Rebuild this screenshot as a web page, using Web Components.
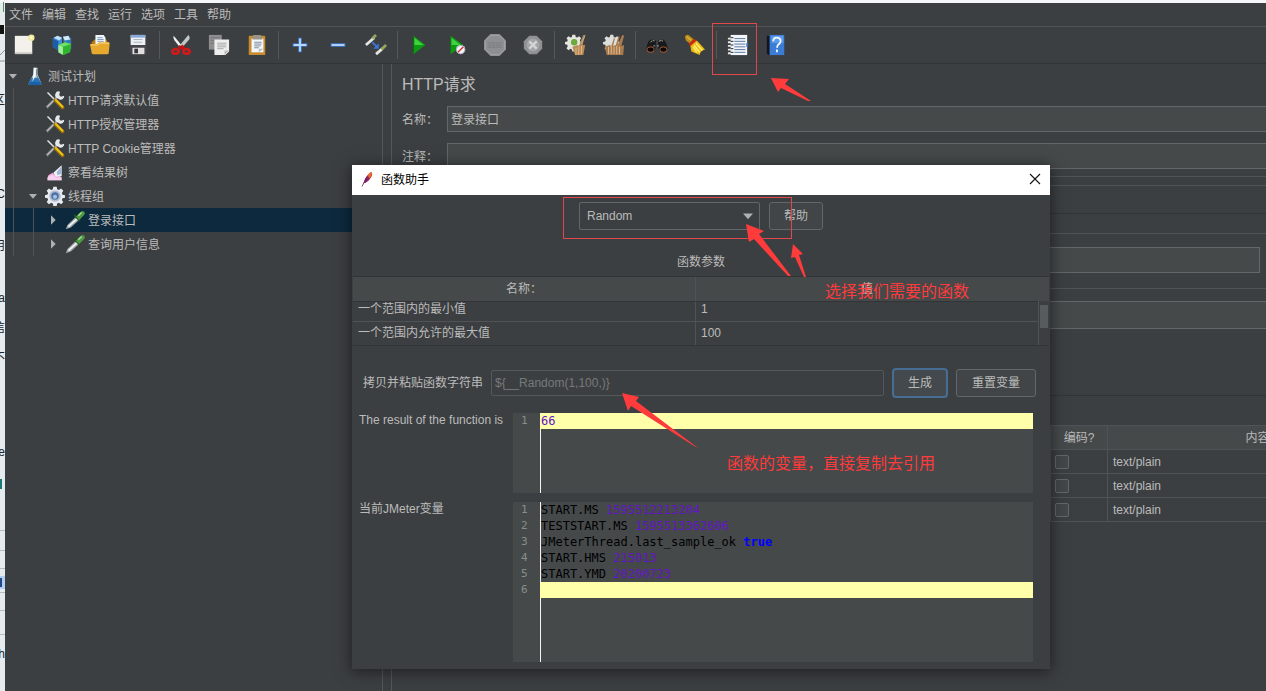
<!DOCTYPE html>
<html lang="zh-CN">
<head>
<meta charset="utf-8">
<title>Apache JMeter</title>
<style>
  :root {
    --bg: #3c3f41; --field: #45494a; --line: #646769; --soft: #515456; --dark: #323537;
    --text: #bbbbbb; --select: #0d293e; --red: #ff3b3b;
  }
  body {
    margin: 0; height: 100vh; overflow: hidden; background: #f4f6fa; color: var(--text);
    font: 12px/16px "Liberation Sans", "Noto Sans CJK SC", sans-serif;
  }
</style>
</head>
<body>
<app-window></app-window>
<script>
const define = (name, html, setup) => {
  const template = document.createElement('template');
  template.innerHTML = '<style>*{box-sizing:border-box}button,input,select{font:inherit;color:inherit}</style>' + html;
  customElements.define(name, class extends HTMLElement {
    constructor() {
      super();
      this.attachShadow({ mode: 'open' }).append(template.content.cloneNode(true));
    }
    connectedCallback() { if (setup) setup(this, this.shadowRoot); }
  });
};

/* Icon drawings, all on a 24 x 24 grid */
const tools = '<path d="M3 3l10 10" stroke="#e4e4e4" stroke-width="1.800"/><path d="M2 21L15 8" stroke="#8c9093" stroke-width="3"/><path d="M3 20L16 7" stroke="#d5d8da" stroke-width="1"/><path d="M15 10a4 4 0 0 1 3-8l-1 4 2 2 4-1a4 4 0 0 1-6 4z" fill="#e6e9eb"/><path d="M12.500 12.500L21 21" stroke="#8f6c08" stroke-width="4.500" stroke-linecap="round"/><path d="M13 12l8 8" stroke="#f0c020" stroke-width="2.500" stroke-linecap="round"/>';
const pipette = '<path d="M1 23l2-5 10-10 4 4-10 9z" fill="#a3a9a9"/><path d="M4 20l11-10" stroke="#f2f5f5" stroke-width="2"/><path d="M11 6l7 7" stroke="#244f24" stroke-width="2.500"/><path d="M13 8l5-5q3-3 5-1t-1 5l-5 5z" fill="#4f9a45"/><path d="M16 7l4-4" stroke="#a4dc98" stroke-width="1.800"/>';
const gearPath = 'M10 1h4l.6 3 2 .9L19.300 3 22 5.700 20.200 8.400l.8 2 3 .6v3l-3 .7-.9 2L22 19.300 19.300 22l-2.700-1.800-2 .8-.6 3h-4l-.6-3-2-.8L4.700 22 2 19.300l1.800-2.700-.8-2L0 14v-3l3-.7.8-2L2 5.700 4.700 3l2.700 1.900 2-.9z';
const ICONS = {
  none: '',
  file: '<path d="M2 2h19v19H2z" fill="#f2f1ec"/><path d="M2 20h19v2H2z" fill="#c9c8c2"/><circle cx="20" cy="4" r="3.500" fill="#f0ea9a"/><circle cx="20" cy="4" r="1.500" fill="#fffbd0"/>',
  boxes: '<path d="M2 5l5-3 5 2v10l-4 4-6-4z" fill="#3f8fd8"/><path d="M2 5l6 3v10l-6-4z" fill="#1f5ca8"/><path d="M3 4l4-2 5 2-3 3z" fill="#c5e0f5"/><path d="M13 3l6-1 3 3v11l-7 3z" fill="#3478b8"/><path d="M13 3l6-1 2 4-6 1z" fill="#d6ebf8"/><path d="M8 12l7-3 7 2-1 9-7 3-6-3z" fill="#2fb52f"/><path d="M8 12l5 2v9l-5-3z" fill="#a2eea0"/><path d="M8 12l7-3 7 2-9 3z" fill="#6ee06a"/>',
  open: '<path d="M3 9l3-3h13l2 4v8H3z" fill="#b97a12"/><path d="M7 1h9l2 3v9H7z" fill="#f2f5fa"/><path d="M9 4h6M9 6h7M9 8h7" stroke="#7897bd"/><path d="M1 11h8l2-2h10q2 0 1.500 2l-1 10q0 1-2 1H5q-2 0-2-1z" fill="#e6a92d"/><path d="M2 12h8l2-2h10" stroke="#f9d779" fill="none"/>',
  save: '<path d="M3 2h18v20H5l-2-2z" fill="#46464c"/><path d="M4 1h16v11H4z" fill="#eef2f7"/><path d="M4 1h16v3H4z" fill="#88a9d8"/><path d="M7 6h10M7 9h10" stroke="#a9b2bd"/><path d="M6 15h13v7H6z" fill="#e1dfe0"/><path d="M8 16h4v5H8z" fill="#37373b"/>',
  cut: '<path d="M4 2q-1 2 1 5l7 9 2-2z" fill="#edf2f2"/><path d="M20 1q3 3 0 6l-8 9-2-3z" fill="#bfcaca"/><path d="M12 13l-2 3m2-3l3 3" stroke="#c01414" stroke-width="4"/><ellipse cx="6" cy="19" rx="3.500" ry="2.500" fill="none" stroke="#d01919" stroke-width="3"/><ellipse cx="18" cy="19" rx="3.500" ry="2.500" fill="none" stroke="#d01919" stroke-width="3"/>',
  copy: '<path d="M1 1h14v16H1z" fill="#8e8e90"/><path d="M3 4h10M3 7h10M3 10h10" stroke="#777"/><path d="M7 6h16v13l-4 4H7z" fill="#eeeeee"/><path d="M10 10h10M10 12h10M10 14h10M10 16h7" stroke="#a3a3a3"/><path d="M18 23v-5h5z" fill="#bbb"/>',
  paste: '<rect x="3" y="2" width="18" height="21" rx="1" fill="#c88c2f"/><path d="M6 5h13v15H6z" fill="#f5f6f8"/><path d="M8 1h8l2 5H7z" fill="#97948b"/><path d="M9 9h8M9 11h8M9 13h7M9 15h5" stroke="#74849d"/><path d="M14 20v-4h5z" fill="#b5bccb"/>',
  plus: '<path d="M10 4h4v6h6v4h-6v6h-4v-6H4v-4h6z" fill="#3f76c0"/><path d="M12 5v14M5 12h14" stroke="#b7d8fa" stroke-width="2"/>',
  minus: '<path d="M4 10h16v4H4z" fill="#3f76c0"/><path d="M5 12h14" stroke="#b7d8fa" stroke-width="2"/>',
  toggle: '<path d="M1 12l9-8" stroke="#e4e6df" stroke-width="3"/><path d="M8 5l4-4" stroke="#91a75d" stroke-width="3"/><path d="M12 22l7-6" stroke="#e4e6df" stroke-width="3"/><path d="M18 17l5-5" stroke="#91a75d" stroke-width="3"/><path d="M8 9l5 5" stroke="#3b76d8" stroke-width="2"/><path d="M15 10v6H9z" fill="#3b76d8"/>',
  run: '<path d="M6 2l13 10L6 22z" fill="#0d9a12"/><path d="M7 4l10 8H7z" fill="#3fd23f"/><path d="M6 3v18" stroke="#0a6d0e" stroke-width="1"/>',
  runSkip: '<path d="M5 2l14 10L5 22z" fill="#0d9a12"/><path d="M6 4l10 8H6z" fill="#3fd23f"/><circle cx="16" cy="17" r="5" fill="#f3f3fa"/><path d="M13 20l6-6" stroke="#d12d2d" stroke-width="1.500"/><circle cx="16" cy="17" r="4.500" fill="none" stroke="#a3a5b5"/>',
  stop: '<path d="M7 0h10l7 7v10l-7 7H7l-7-7V7z" fill="#8d8f90"/><path d="M7.500 1.500h9l6 6v9l-6 6h-9l-6-6v-9z" fill="none" stroke="#a3a5a6"/><path d="M4 9.500h16M4 14.500h16" stroke="#7d8081"/><path d="M5 12h14" stroke="#808384" stroke-width="3" stroke-dasharray="3 1"/>',
  shutdown: '<path d="M8 2h8l6 6v8l-6 6H8l-6-6V8z" fill="#8f9192"/><circle cx="12" cy="12" r="7" fill="#a3a5a6"/><path d="M8 8l8 8M16 8l-8 8" stroke="#d3d5d5" stroke-width="2.500"/>',
  clear: '<g transform="translate(0 0) scale(.8)"><path d="' + gearPath + '" fill="#e5e5e0"/></g><circle cx="10" cy="9" r="3.500" fill="#6da83a"/><path d="M8 14l6-2 1 1 5-12 2 1-3 10h3l-2 11h-9z" fill="#b98b59"/><path d="M12 15v8M15 14v9M18 13v9" stroke="#e2bd8b"/><path d="M18 11l4-10" stroke="#b9ab95"/>',
  clearAll: '<g transform="translate(0 0) scale(.8)"><path d="' + gearPath + '" fill="#dddedb"/></g><path d="M2 14l5-2 2 1 3-9 1 1-2 8 3-1 3-10 1 1-2 9 5-11 2 1-3 11 3-1-1 11H4z" fill="#a97c50"/><path d="M6 14v8M9 13v9M12 14v8M15 13v9M18 14v8" stroke="#dfbb8d"/>',
  search: '<path d="M0 17Q2 6 6 6l5 1-1 11zM24 17Q22 6 18 6l-5 1 1 11z" fill="#17191a"/><path d="M5 9q2-3 5-1M14 8q4-2 5 1" stroke="#d2d2c8" fill="none" stroke-dasharray="2 1"/><ellipse cx="5" cy="17" rx="4" ry="3" fill="#090909" stroke="#b2653b"/><ellipse cx="19" cy="17" rx="4" ry="3" fill="#090909" stroke="#b2653b"/><path d="M8 13h7" stroke="#aaa" stroke-dasharray="2 2"/>',
  broom: '<path d="M1 3q1-3 4-2l6 5-5 4-4-3z" fill="#b98b16"/><path d="M3 3l5 4" stroke="#dfb93e" stroke-width="1.500"/><path d="M5 11l6-6 3 3-7 6z" fill="#c92b17"/><path d="M7 13l7-6 9 10q-5 1-6 6l-9-4z" fill="#e8b817"/><path d="M11 12l6 8M13 10l7 8M10 14l4 6" stroke="#ffed64" stroke-width="1.800"/>',
  notebook: '<path d="M4 1h18v22H4z" fill="#f2f5f9"/><path d="M8 5h12M8 8h12M8 11h12M8 14h12M8 17h12M8 20h12" stroke="#50719d"/><path d="M1 5h5M1 9h5M1 13h5M1 17h5M1 21h5" stroke="#e9e9e9" stroke-width="2"/><path d="M4 4h3M4 8h3M4 12h3M4 16h3M4 20h3" stroke="#15191e"/><path d="M21 10h2v4h-2z" fill="#3d79c8"/>',
  help: '<path d="M2 2h5v21H4l-2-2z" fill="#11151c"/><path d="M5 1h16v22H5z" fill="#3b7cd4"/><path d="M7 2h13v8H7z" fill="#5a9cea"/><path d="M9 8q0-4 4-4t4 4q0 2-3 4l-1 3M13 17v3" fill="none" stroke="#f1f6ff" stroke-width="2"/>',
  flask: '<path d="M10 2h5v8l5 12H4l6-12z" fill="#c3d3dc"/><path d="M8 14h8l4 8H4z" fill="#2675bd"/><path d="M11 2h2v9l-4 8z" fill="#f7fbfd"/><path d="M14 4v7l3 7" stroke="#587687" fill="none"/><ellipse cx="12" cy="21" rx="8" ry="2" fill="#1861a7"/>',
  tools, pipette,
  chart: '<path d="M3 22l1-6 5-3 5 4 4-1 2 6z" fill="#f6a9de"/><path d="M3 22v-4l6-3 4 4 7-1v4z" fill="#f5d2ee"/><path d="M10 13l10-9v13h-4l-3 1z" fill="#eef3fa"/><path d="M14 12l6-7v9l-5 2z" fill="#a4b5d3"/>',
  gear: '<path d="' + gearPath + '" fill="#e7ebf1"/><circle cx="12" cy="12" r="7" fill="#b1bdcd"/><circle cx="12" cy="12" r="4.500" fill="#4a70a8"/><circle cx="12" cy="13" r="2.500" fill="#a7c1e2"/>',
  feather: '<path d="M6 21l3-6" stroke="#6b2450" stroke-width="1"/><path d="M8 17q1-7 7-12 2-2 3 0t-2 6q-3 5-8 6z" fill="#a5204c"/><path d="M13 8q2-4 5-4 1 1-1 4l-2 3z" fill="#e5702b"/><path d="M8 17q1-5 4-8l1 4q-2 4-5 4z" fill="#6b2470"/>',
  close: '<path d="M6 6l12 12M18 6L6 18" stroke="#111" stroke-width="1.300"/>',
  down: '<path d="M6 9h12l-6 7z" fill="#aeb1b3"/>',
  right: '<path d="M9 5l7 7-7 7z" fill="#aeb1b3"/>'
};
customElements.define('ui-icon', class extends HTMLElement {
  static observedAttributes = ['name'];
  constructor() { super(); this.attachShadow({ mode: 'open' }); }
  attributeChangedCallback() {
    this.shadowRoot.innerHTML = `<style>:host{display:block;flex:none;width:24px;height:24px}svg{display:block;width:100%;height:100%}</style>
      <svg viewBox="0 0 24 24" fill="none" aria-hidden="true">${ICONS[this.getAttribute('name')]}</svg>`;
  }
});

define('menu-bar', `
<style>
  :host { display: block; border-bottom: 1px solid var(--soft); }
  nav { display: flex; height: 23px; padding-left: 4px; gap: 9px; }
  button { border: 0; padding: 0; background: none; }
</style>
<nav><button>文件</button><button>编辑</button><button>查找</button><button>运行</button><button>选项</button><button>工具</button><button>帮助</button></nav>`);

define('tool-button', `
<style>
  :host { display: block; }
  button { display: grid; place-items: center; width: 38px; height: 36px; border: 0; padding: 0; background: none; }
  ui-icon { width: 22px; height: 22px; }
</style>
<button><ui-icon name="none"></ui-icon></button>`, (el, root) => {
  root.querySelector('ui-icon').setAttribute('name', el.getAttribute('icon'));
  root.querySelector('button').setAttribute('aria-label', el.getAttribute('label'));
});

define('tool-bar', `
<style>
  :host { display: flex; height: 37px; border-bottom: 1px solid var(--dark); }
  i { width: 1px; margin: 4px 2px; background: #555859; }
</style>
<tool-button icon="file" label="新建"></tool-button><tool-button icon="boxes" label="模板"></tool-button><tool-button icon="open" label="打开"></tool-button><tool-button icon="save" label="保存"></tool-button><i></i>
<tool-button icon="cut" label="剪切"></tool-button><tool-button icon="copy" label="复制"></tool-button><tool-button icon="paste" label="粘贴"></tool-button><i></i>
<tool-button icon="plus" label="展开"></tool-button><tool-button icon="minus" label="折叠"></tool-button><tool-button icon="toggle" label="切换"></tool-button><i></i>
<tool-button icon="run" label="启动"></tool-button><tool-button icon="runSkip" label="不停顿开始"></tool-button><tool-button icon="stop" label="停止"></tool-button><tool-button icon="shutdown" label="关闭"></tool-button><i></i>
<tool-button icon="clear" label="清除"></tool-button><tool-button icon="clearAll" label="清除全部"></tool-button><i></i>
<tool-button icon="search" label="搜索"></tool-button><tool-button icon="broom" label="重置搜索"></tool-button><i></i>
<tool-button icon="notebook" label="函数助手"></tool-button><tool-button icon="help" label="帮助"></tool-button>`);

define('tree-node', `
<style>
  :host { display: block; }
  .row { display: flex; align-items: center; height: 24px; }
  :host([selected]) .row { background: var(--select); }
  .indent { display: flex; align-self: stretch; }
  .indent i { width: 20px; padding-left: 8px; }
  .indent i::before { content: ""; display: block; width: 1px; height: 100%; background: #505355; }
  .arrow { width: 16px; height: 16px; }
  .pic { width: 20px; height: 20px; margin: 0 3px 0 4px; }
  .text { padding-top: 2px; }
</style>
<div class="row"><span class="indent"></span><ui-icon class="arrow"></ui-icon><ui-icon class="pic"></ui-icon><span class="text"><slot></slot></span></div>`, (el, root) => {
  root.querySelector('.indent').innerHTML = '<i></i>'.repeat(+el.getAttribute('level'));
  root.querySelector('.arrow').setAttribute('name', el.getAttribute('arrow') || 'none');
  root.querySelector('.pic').setAttribute('name', el.getAttribute('icon'));
});

define('test-tree', `
<style>:host { display: block; }</style>
<tree-node level="0" arrow="down" icon="flask">测试计划</tree-node>
<tree-node level="1" icon="tools">HTTP请求默认值</tree-node>
<tree-node level="1" icon="tools">HTTP授权管理器</tree-node>
<tree-node level="1" icon="tools">HTTP Cookie管理器</tree-node>
<tree-node level="1" icon="chart">察看结果树</tree-node>
<tree-node level="1" arrow="down" icon="gear">线程组</tree-node>
<tree-node level="2" arrow="right" icon="pipette" selected>登录接口</tree-node>
<tree-node level="2" arrow="right" icon="pipette">查询用户信息</tree-node>`);

define('request-panel', `
<style>
  :host { display: block; overflow: hidden; padding-left: 10px; }
  h1 { margin: 0; height: 42px; font: 16px/42px "Liberation Sans", "Noto Sans CJK SC", sans-serif; }
  .field { display: grid; grid-template-columns: 45px 1fr; align-items: center; height: 26px; margin-bottom: 11px; }
  .field label { padding-top: 2px; }
  input[type=text] { display: block; width: 100%; height: 26px; padding: 0 3px; border: 1px solid var(--line); border-right: 0; background: var(--field); }
  .field input { padding-bottom: 2px; }
  .tabs { height: 9px; margin-top: -4px; border-top: 1px solid var(--soft); }
  .proto { height: 49px; border: solid var(--soft); border-width: 1px 0; padding-top: 27px; }
  .proto::before { content: ""; display: block; height: 1px; background: var(--dark); }
  .path { padding: 13px 6px 15px 0; border-bottom: 1px solid var(--soft); }
  .path input { border-right: 1px solid var(--line); }
  .args { padding: 12px 0 66px; border-bottom: 1px solid var(--dark); }
  .args input { height: 28px; }
  table { width: 1006px; margin-top: 29px; border-collapse: collapse; table-layout: fixed; }
  th { height: 24px; padding: 0; background: var(--field); font-weight: normal; border: 1px solid #505355; }
  td { height: 24px; padding: 0 5px; border: 1px solid #505355; }
  td.check { padding: 0 4px; }
  input[type=checkbox] { appearance: none; display: block; width: 14px; height: 14px; margin: 0; border: 1px solid var(--line); border-radius: 2px; background: #43474a; }
</style>
<h1>HTTP请求</h1>
<div class="field"><label for="name">名称：</label><input id="name" type="text" value="登录接口"></div>
<div class="field"><label for="note">注释：</label><input id="note" type="text"></div>
<div class="tabs"></div>
<div class="proto"></div>
<div class="path"><input type="text" aria-label="路径"></div>
<div class="args"><input type="text" aria-label="参数"></div>
<table>
  <colgroup><col><col style="width:57px"><col style="width:300px"></colgroup>
  <thead><tr><th></th><th>编码?</th><th>内容</th></tr></thead>
  <tbody>
    <tr><td></td><td class="check"><input type="checkbox" aria-label="编码"></td><td>text/plain</td></tr>
    <tr><td></td><td class="check"><input type="checkbox" aria-label="编码"></td><td>text/plain</td></tr>
    <tr><td></td><td class="check"><input type="checkbox" aria-label="编码"></td><td>text/plain</td></tr>
  </tbody>
</table>`);

define('code-line', `
<style>
  :host { display: grid; grid-template-columns: 27px 1fr; height: 16px; font: 12px/16px "DejaVu Sans Mono", monospace; color: #000; }
  span { color: #8a8d8e; font-size: 11px; padding-left: 8px; }
  div { padding-left: 1px; white-space: pre; }
  :host([active]) div { background: #ffffaa; }
  ::slotted(b) { font-weight: normal; color: #6414c8; }
  ::slotted(strong) { color: #0000ff; }
</style>
<span></span><div><slot></slot></div>`, (el, root) => { root.querySelector('span').textContent = el.getAttribute('n'); });

define('code-view', `
<style>
  :host { display: block; background: linear-gradient(#f4f4f4, #f4f4f4) 27px 0 / 1px 100% no-repeat var(--field); }
</style><slot></slot>`);

define('function-dialog', `
<style>
  :host { display: flex; flex-direction: column; background: var(--bg); box-shadow: 0 2px 14px 1px rgba(0,0,0,.5); }
  header { display: flex; align-items: center; height: 30px; padding: 0 5px 2px 5px; background: #fff; color: #000; }
  header ui-icon { width: 20px; height: 20px; }
  header span { flex: 1; padding: 2px 0 0 4px; }
  header button { border: 0; padding: 0; background: none; }
  .pick { display: flex; justify-content: center; gap: 9px; padding-top: 7px; }
  .select { display: grid; width: 181px; }
  .select > * { grid-area: 1 / 1; }
  .select ui-icon { width: 20px; height: 20px; place-self: center end; margin-right: 2px; pointer-events: none; }
  select { appearance: none; width: 100%; height: 28px; padding: 0 7px; border: 1px solid var(--line); border-radius: 2px; background: var(--bg); }
  .btn { height: 28px; padding: 0 14px; border: 1px solid var(--line); border-radius: 3px; background: #414547; }
  h2 { margin: 0; padding: 24px 0 6px; font: inherit; text-align: center; }
  .grid { display: grid; grid-template-columns: 1fr 11px; margin: 0 1px; border: solid var(--dark); border-width: 1px 0; background: linear-gradient(var(--field) 24px, transparent 24px); }
  table { width: 100%; border-collapse: collapse; table-layout: fixed; }
  th { height: 24px; padding: 0; font-weight: normal; border-bottom: 1px solid var(--dark); }
  td { height: 24px; padding: 0 5px; border-bottom: 1px solid #505355; }
  tr > :first-child { border-right: 1px solid #505355; }
  tr.cut td { height: 19px; padding-bottom: 5px; line-height: 14px; }
  tr:last-child td { border-bottom: 0; }
  .bar { margin-top: 24px; padding: 4px 1px; border-left: 1px solid #505355; }
  .bar::before { content: ""; display: block; height: 23px; background: #585b5c; }
  .copy { display: flex; align-items: center; height: 30px; margin: 22px 14px 0 11px; }
  .copy input { flex: 1; min-width: 0; height: 26px; margin: 0 8px 0 8px; padding: 0 3px; border: 1px solid #555859; border-radius: 2px; background: var(--bg); color: #777a7b; }
  .copy .btn { padding: 0 15px; }
  .copy .go { height: 30px; padding: 0 14px; margin-right: 8px; border: 2px solid #466d94; border-radius: 4px; background: #43494c; }
  .out { display: grid; grid-template-columns: 154px 1fr; margin: 15px 17px 0 7px; row-gap: 9px; }
  .out span { line-height: 14px; }
  .big { min-height: 160px; } .small { min-height: 80px; }
</style>
<header><ui-icon name="feather"></ui-icon><span>函数助手</span><button aria-label="关闭"><ui-icon name="close"></ui-icon></button></header>
<div class="pick">
  <div class="select"><select aria-label="函数"><option>Random</option></select><ui-icon name="down"></ui-icon></div>
  <button class="btn">帮助</button>
</div>
<h2>函数参数</h2>
<div class="grid">
  <table>
    <thead><tr><th>名称：</th><th>值</th></tr></thead>
    <tbody><tr class="cut"><td>一个范围内的最小值</td><td>1</td></tr><tr><td>一个范围内允许的最大值</td><td>100</td></tr></tbody>
  </table>
  <div class="bar"></div>
</div>
<div class="copy"><label for="fn">拷贝并粘贴函数字符串</label><input id="fn" type="text" readonly value="\${__Random(1,100,)}"><button class="btn go">生成</button><button class="btn">重置变量</button></div>
<div class="out">
  <span>The result of the function is</span>
  <code-view class="small"><code-line n="1" active><b>66</b></code-line></code-view>
  <span>当前JMeter变量</span>
  <code-view class="big"><code-line n="1">START.MS <b>1595512213204</b></code-line><code-line n="2">TESTSTART.MS <b>1595513362606</b></code-line><code-line n="3">JMeterThread.last_sample_ok <strong>true</strong></code-line><code-line n="4">START.HMS <b>215013</b></code-line><code-line n="5">START.YMD <b>20200723</b></code-line><code-line n="6" active></code-line></code-view>
</div>`);

/* Red hand-made marks that lie over the window */
define('note-layer', `
<style>
  :host { position: absolute; inset: 0; overflow: hidden; pointer-events: none; color: var(--red); }
  svg { display: block; width: 100%; height: 100%; }
  p { position: absolute; margin: 0; font-size: 16px; line-height: 20px; white-space: nowrap; }
  .pick { left: 825px; top: 282px; }
  .use { left: 727px; top: 454px; }
</style>
<svg aria-hidden="true">
  <g fill="none" stroke="#e0484c" shape-rendering="crispEdges"><rect x="712.500" y="23.500" width="44" height="51"/><rect x="563.500" y="197.500" width="228" height="41"/></g>
  <g fill="#ff3b3b">
    <path d="M771 78l18 1-4 5 26 17h-3l-27-13-3 4z"/>
    <path d="M746 224l18 7-5 3 32 42h-3l-34-37-5 3z"/>
    <path d="M793 244l10 10-4 1 7 22h-2l-9-20-4 1z"/>
    <path d="M622 393l17 4-3 4 62 47-4-2-63-40-3 5z"/>
  </g>
</svg>
<p class="pick">选择我们需要的函数</p>
<p class="use">函数的变量，直接复制去引用</p>`);

/* Sliver of the page behind the application window: line ends and rules */
define('back-page', `
<style>
  :host { display: grid; grid-template: 100% / 5px; overflow: hidden; background: #e6ebef; color: #222; }
  svg, .ends { grid-area: 1 / 1; }
  svg { display: block; width: 5px; height: 691px; }
  .ends { display: flex; flex-direction: column; align-items: flex-end; min-width: 0; }
  span { flex: none; height: 16px; }
  .s1 { margin-top: 92px; } .s2 { margin-top: 78px; } .s3 { margin-top: 36px; } .s4 { margin-top: 14px; } .s5 { margin-top: 186px; }
</style>
<svg fill="none" aria-hidden="true">
  <path d="M0 0h5v3H0z" fill="#f4f6fa"/><path d="M3 2h1v10H3z" fill="#4c9a50"/>
  <path d="M0 25h4v9H0z" fill="#111"/><path d="M0 55l5-5M0 61h5" stroke="#8c969c"/>
  <path d="M0 479h2v10H0z" fill="#1b7a72"/>
  <path d="M0 530.500h5M0 550.500h5M0 568.500h5M0 592.500h5M0 610.500h5M0 634.500h5" stroke="#b5bcc2"/>
  <path d="M0 576h5v13H0z" fill="#b4cdf2"/><path d="M0 578h2v9H0z" fill="#234a88"/>
</svg>
<div class="ends" aria-hidden="true"><span class="s1">区</span><span class="s2">C</span><span class="s3">用</span><span class="s3">a</span><span class="s4">信</span><span class="s4">不</span><span class="s2">e</span><span class="s5">h</span></div>`);

define('app-window', `
<style>
  :host { display: grid; grid-template-columns: 5px 1fr; height: 100%; position: relative; }
  .app { display: flex; flex-direction: column; min-width: 0; margin-top: 3px; background: var(--bg); }
  main { flex: 1; min-height: 0; display: grid; grid-template-columns: 377px 10px 1fr; }
  .split { border: solid #55585a; border-width: 0 1px; }
  function-dialog { position: absolute; left: 352px; top: 165px; width: 698px; height: 504px; }
</style>
<back-page></back-page>
<div class="app">
  <menu-bar></menu-bar>
  <tool-bar></tool-bar>
  <main><test-tree></test-tree><div class="split"></div><request-panel></request-panel></main>
</div>
<function-dialog></function-dialog>
<note-layer></note-layer>`);
</script>
</body>
</html>
